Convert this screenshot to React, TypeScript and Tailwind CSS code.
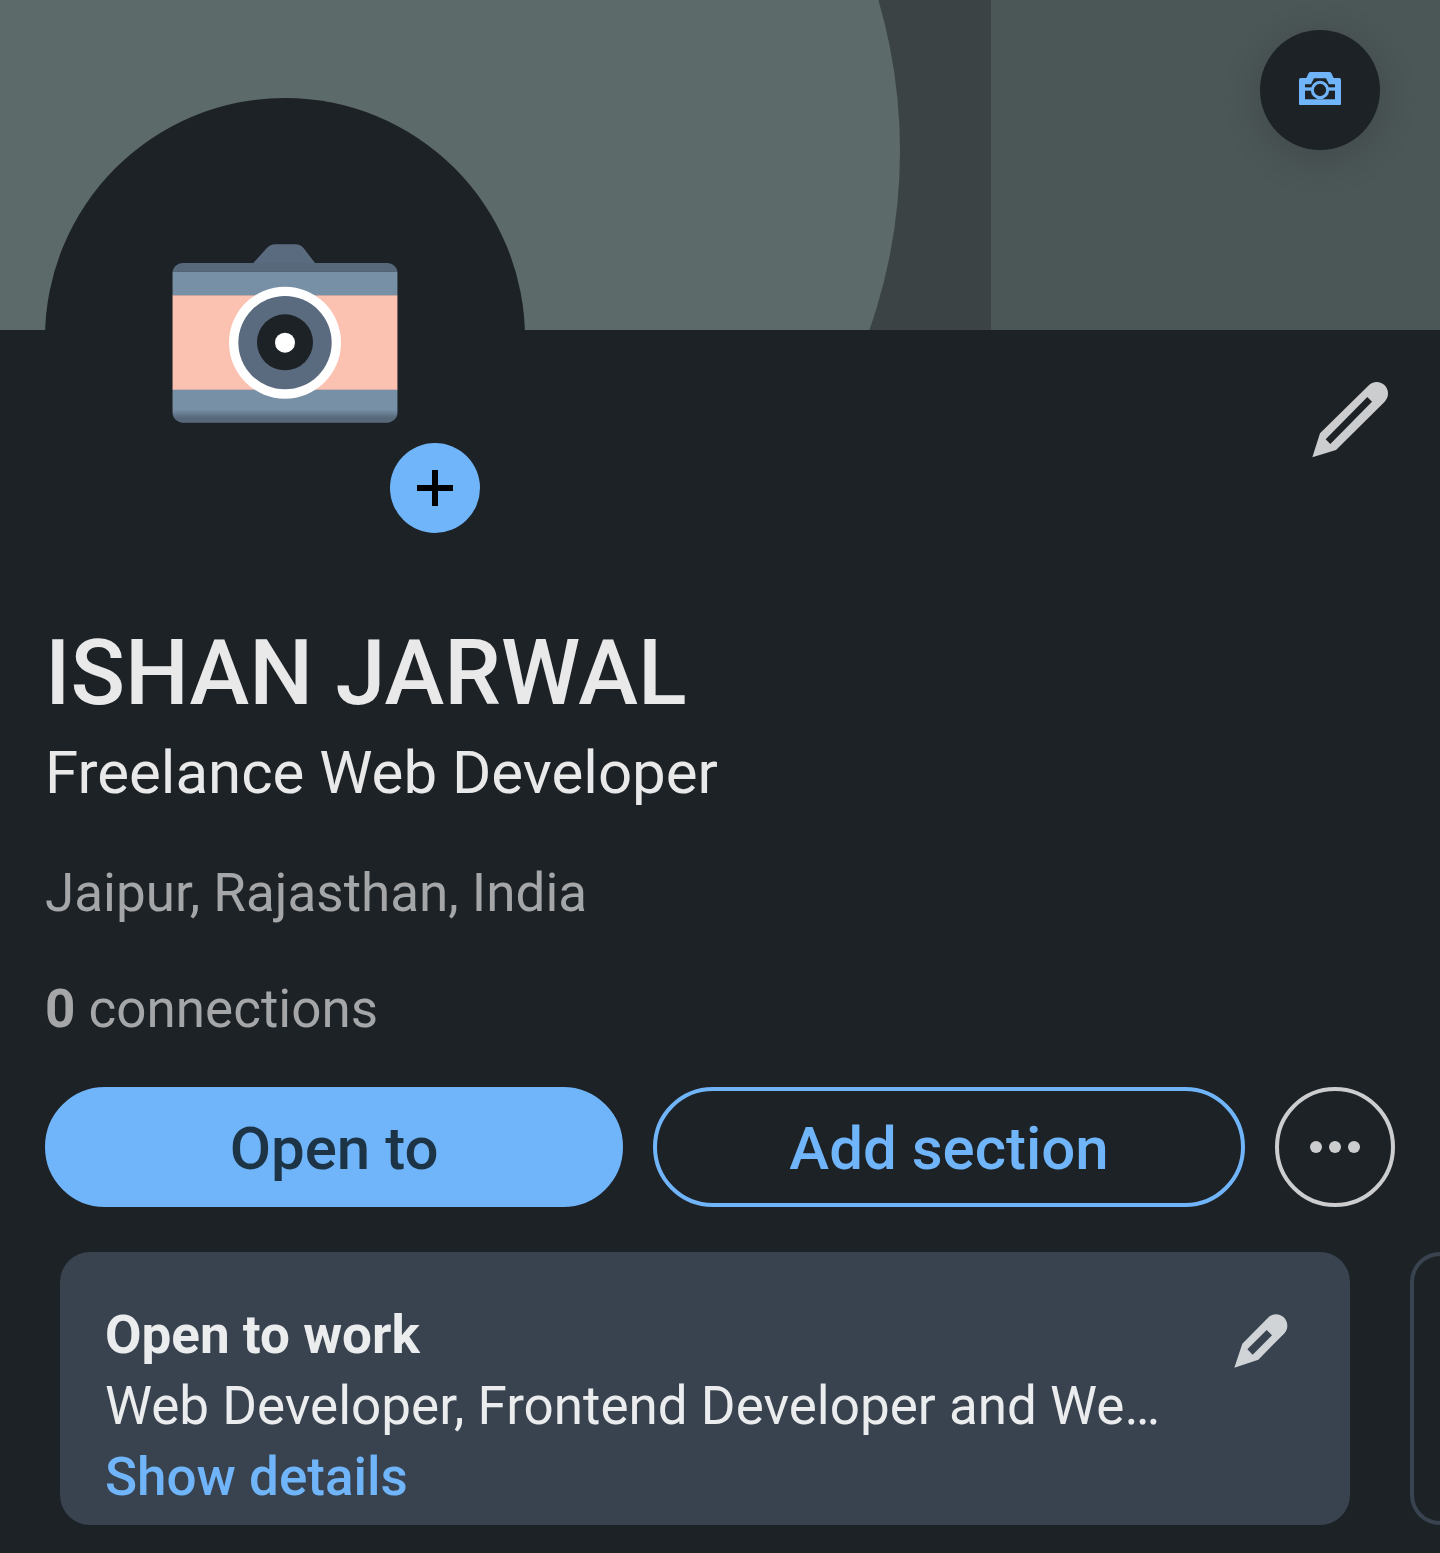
import React from "react";

function CoverArt() {
  return (
    <svg className="block h-[330px] w-full" viewBox="0 0 1440 330" preserveAspectRatio="xMidYMid slice" aria-hidden="true">
      <rect width="1440" height="330" fill="#3c4344" />
      <rect x="991" width="449" height="330" fill="#4b5657" />
      <circle cx="362" cy="151" r="538" fill="#5d6a6a" />
    </svg>
  );
}

function CameraIcon() {
  return (
    <svg className="w-[42px]" viewBox="177 185 126 100" aria-hidden="true">
      <path
        d="M182 203H199L206 188Q208 185 212 185H268Q272 185 274 188L281 203H298Q303 203 303 208V280Q303 285 298 285H182Q177 285 177 280V208Q177 203 182 203Z"
        fill="#70b5f9"
      />
      <path d="M222 204H258L267 222H285V267H195V222H213Z" fill="#1d2226" />
      <path d="M195 231H285V241H195Z" fill="#70b5f9" />
      <circle cx="240" cy="239" r="23" fill="#1d2226" stroke="#70b5f9" strokeWidth="9" />
    </svg>
  );
}

function AvatarCamera() {
  return (
    <svg className="w-[226px]" viewBox="66 41 678 537" aria-hidden="true">
      <defs>
        <clipPath id="camera-body">
          <rect x="67" y="98" width="676" height="479" rx="32" />
        </clipPath>
        <linearGradient id="camera-base" x1="0" y1="0" x2="0" y2="1">
          <stop offset="0" stopColor="#7790a6" />
          <stop offset="0.6" stopColor="#7790a6" />
          <stop offset="0.85" stopColor="#56687a" />
          <stop offset="1" stopColor="#56687a" />
        </linearGradient>
      </defs>
      <path d="M308 100L350 54Q361 42 376 42H436Q452 42 461 54L497 100Z" fill="#5a6b80" />
      <g clipPath="url(#camera-body)">
        <rect x="67" y="98" width="676" height="26" fill="#56687a" />
        <rect x="67" y="124" width="676" height="72" fill="#7790a6" />
        <rect x="67" y="195" width="676" height="284" fill="#fcc2b1" />
        <rect x="67" y="478" width="676" height="100" fill="url(#camera-base)" />
      </g>
      <circle cx="405" cy="337" r="168" fill="#ffffff" />
      <circle cx="405" cy="337" r="140" fill="#5a6b80" />
      <circle cx="405" cy="336" r="84" fill="#1d2226" />
      <circle cx="405" cy="337" r="30" fill="#ffffff" />
    </svg>
  );
}

function LargePencil() {
  return (
    <svg className="size-[76px]" viewBox="66 66 228 228" fill="#cccdce" aria-hidden="true">
      <path
        fillRule="evenodd"
        d="M67 292L90 220L235 77Q246 66 260 66C279 66 294 81 294 100Q294 114 284 125L138 270ZM107 238L121 252L246 125L232 111Z"
      />
    </svg>
  );
}

function SmallPencil() {
  return (
    <svg className="size-[54px]" viewBox="70 223 162 162" fill="#d1d4d7" aria-hidden="true">
      <path
        fillRule="evenodd"
        d="M71 384L95 312L172 234Q182 224 196 224C215 224 230 239 230 258Q230 272 220 282L143 360ZM110 329L126 345L184 287L168 271Z"
      />
    </svg>
  );
}

export default function App() {
  return (
    <main className="min-h-screen overflow-hidden bg-[#1d2226] pb-7 font-['Roboto',sans-serif] text-[#e9e9ea]">
      <header className="relative">
        <CoverArt />
        <button
          aria-label="Edit cover photo"
          className="absolute top-[30px] right-[60px] flex size-[120px] items-center justify-center rounded-full bg-[#1d2226] pb-[3px] shadow-[0_8px_40px_rgba(0,0,0,0.15)]"
        >
          <CameraIcon />
        </button>
      </header>

      <div className="flex items-start justify-between pr-[52px] pl-[45px]">
        <div className="relative -mt-[232px] flex size-[480px] items-center justify-center rounded-full bg-[#1d2226] pb-[10px]">
          <AvatarCamera />
          <button
            aria-label="Add profile photo"
            className="absolute right-[45px] bottom-[45px] flex size-[90px] items-center justify-center rounded-full bg-[#70b5f9]"
          >
            <svg className="size-9" viewBox="0 0 36 36" aria-hidden="true">
              <path d="M18 0V36M0 18H36" stroke="#000000" strokeWidth="6" />
            </svg>
          </button>
        </div>
        <button aria-label="Edit profile" className="mt-[52px]">
          <LargePencil />
        </button>
      </div>

      <section className="mt-[42px] px-[45px]">
        <h1 className="text-[90px] leading-[108px] font-medium">ISHAN JARWAL</h1>
        <p className="mt-[9px] text-[60px] leading-[72px]">Freelance Web Developer</p>
        <p className="mt-[52px] text-[53px] leading-[64px] text-[#a4a6a8]">Jaipur, Rajasthan, India</p>
        <p className="mt-[52px] text-[53px] leading-[64px] text-[#a4a6a8]">
          <strong className="font-bold">0</strong> connections
        </p>

        <div className="mt-[46px] flex gap-[30px] text-[60px] leading-[72px] font-medium">
          <button className="h-[120px] flex-[578] rounded-full border-4 border-[#70b5f9] bg-[#70b5f9] pt-1 text-[#1d3346]">
            Open to
          </button>
          <button className="h-[120px] flex-[592] rounded-full border-4 border-[#70b5f9] pt-1 text-[#70b5f9]">
            Add section
          </button>
          <button
            aria-label="More options"
            className="flex size-[120px] shrink-0 items-center justify-center rounded-full border-4 border-[#cccdce]"
          >
            <svg className="w-[50px]" viewBox="0 0 50 12" fill="#cccdce" aria-hidden="true">
              <circle cx="6" cy="6" r="6" />
              <circle cx="25" cy="6" r="6" />
              <circle cx="44" cy="6" r="6" />
            </svg>
          </button>
        </div>
      </section>

      <section className="mt-[45px] flex gap-[60px] pl-[60px]">
        <article className="flex min-w-0 flex-1 items-start justify-between rounded-[30px] bg-[#38434f] pt-12 pr-[62px] pb-3 pl-[45px] text-[53px] leading-[71px] text-[#ebeced]">
          <div className="min-w-0">
            <h2 className="font-bold">Open to work</h2>
            <p className="whitespace-nowrap">Web Developer, Frontend Developer and We…</p>
            <a href="#details" className="block font-medium text-[#70b5f9]">
              Show details
            </a>
          </div>
          <button aria-label="Edit job preferences" className="mt-[14px] shrink-0">
            <SmallPencil />
          </button>
        </article>
        <div className="w-[30px] shrink-0 rounded-l-[30px] border-4 border-r-0 border-[#38434f]" />
      </section>
    </main>
  );
}
